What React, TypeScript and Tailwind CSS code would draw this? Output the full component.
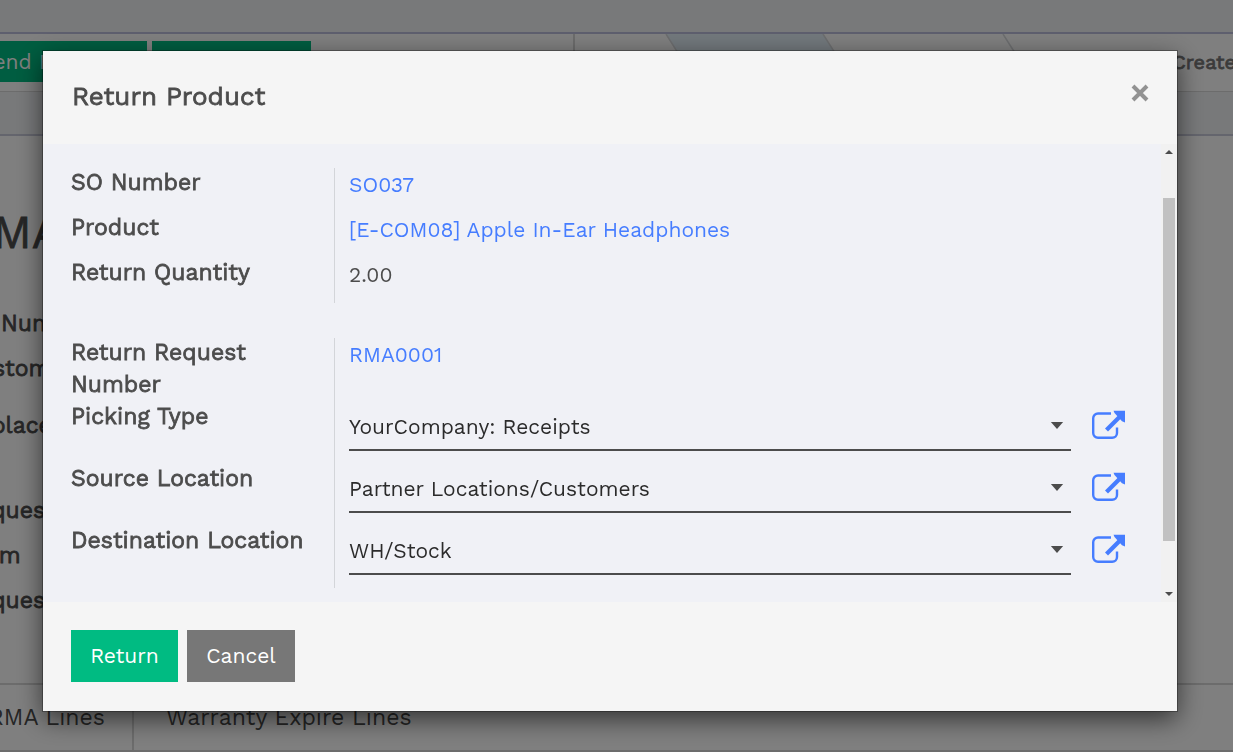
import { useState, type ReactNode } from "react";

const heavy = "font-normal [-webkit-text-stroke:0.8px_currentColor]";
const labelText = `text-[23px] leading-8 ${heavy}`;
const linkText = "text-[#467dff] hover:underline";

function Row({ label, htmlFor, tall, children }: { label: string; htmlFor?: string; tall?: boolean; children: ReactNode }) {
  return (
    <div className={tall ? "flex min-h-[62px]" : "flex min-h-[45px]"}>
      <div className="w-[263px] shrink-0 pr-4">
        <label htmlFor={htmlFor} className={`-mt-px -mb-px block ${labelText}`}>{label}</label>
      </div>
      <div className="flex min-w-0 flex-1 items-start border-l border-[#d3d5d9] pl-[14px] text-[21px] leading-[34px]">{children}</div>
    </div>
  );
}

function OpenIcon() {
  return (
    <svg viewBox="0 0 34 30" className="h-[30px] w-[34px]" fill="none" aria-hidden="true">
      <path d="M19 3.500H6a4.800 4.800 0 0 0-4.800 4.800v14.700a4.800 4.800 0 0 0 4.800 4.800h14.200a4.800 4.800 0 0 0 4.800-4.800v-5.500" stroke="#467dff" strokeWidth="2.400" />
      <path d="M14.500 20 28 6.500" stroke="#467dff" strokeWidth="4.200" />
      <path d="M21.500 0.800H33v11.700L30 11.300 22.500 3z" fill="#467dff" />
    </svg>
  );
}

function SelectField({ id, label, value }: { id: string; label: string; value: string }) {
  return (
    <Row label={label} htmlFor={id} tall>
      <div className="relative min-w-0 flex-1">
        <select id={id} defaultValue={value} className="block h-[49px] w-full appearance-none border-b-2 border-[#4c4c4c] bg-transparent pt-0.5 pr-10 text-[21px] text-[#2b2b2b] outline-none">
          <option>{value}</option>
        </select>
        <svg viewBox="0 0 14 8" className="pointer-events-none absolute top-5 right-[7px] h-[7px] w-[14px]" aria-hidden="true">
          <path d="M0 0h14L7 8z" fill="#4c4c4c" />
        </svg>
      </div>
      <button type="button" aria-label={`Open ${label}`} className="mt-2 mr-[35px] ml-[21px] shrink-0">
        <OpenIcon />
      </button>
    </Row>
  );
}

function Backdrop() {
  return (
    <div className="flex min-h-screen flex-col overflow-hidden bg-white text-[#4c4c4c]" aria-hidden="true">
      <div className="h-[34px] border-b-2 border-[#bcbfdc] bg-[#f0f2f5]" />
      <div className="flex h-[58px] items-start justify-between border-b border-[#d8d8d8]">
        <div className="flex pt-[7px] text-[21px] text-white">
          <div className="flex h-[41px] w-[147px] items-center overflow-hidden bg-[#00bb82]">
            <span className="-ml-5 whitespace-nowrap">Send Email</span>
          </div>
          <div className="ml-[5px] h-[41px] w-[159px] bg-[#00bb82]" />
        </div>
        <div className="flex h-full w-[660px] border-l-2 border-[#d8d8d8]">
          <svg viewBox="0 0 500 57" className="h-[57px] w-[500px] shrink-0">
            <path d="M91 0H248L284 57H127z" fill="#e4f0f8" />
            <path d="M91 0 127 57M248 0 284 57M428 0 464 57" stroke="#d8dadd" strokeWidth="1.500" fill="none" />
          </svg>
          <div className={`-mr-[3px] ml-auto self-center pb-px text-[20px] whitespace-nowrap text-[#777777] ${heavy}`}>Create</div>
        </div>
      </div>
      <div className="h-[44px] border-b-2 border-[#c8cada] bg-[#f0f2f5]" />
      <div className="flex-1 whitespace-nowrap">
        <div className={`-ml-[38px] pt-[67px] text-[46px] leading-[58px] ${heavy}`}>RMA0001</div>
        <div className={`flex h-[422px] flex-col pt-[47px] ${labelText}`}>
          <div className="h-[45px] pl-px">Number</div>
          <div className="-ml-[37px] h-[57px]">Customer</div>
          <div className="-ml-[37px] h-[85px]">Replace</div>
          <div className="-ml-[37px] h-[45px]">Request</div>
          <div className="-ml-[31px] h-[45px]">Item</div>
          <div className="-ml-[37px] h-[45px]">Request</div>
        </div>
        <div className="flex h-[69px] border-y-2 border-[#d8d8d8] text-[23px]">
          <div className="flex w-[134px] items-center justify-end border-r-2 border-[#d8d8d8] pt-0.5 pr-[27px]">RMA Lines</div>
          <div className="flex items-center pt-0.5 pl-8">Warranty Expire Lines</div>
        </div>
      </div>
    </div>
  );
}

export default function App() {
  const [open, setOpen] = useState(true);
  const close = () => setOpen(false);
  return (
    <div className="relative h-screen overflow-hidden font-['Work_Sans',Inter,sans-serif]">
      <Backdrop />
      {open && (
        <div className="fixed inset-0 overflow-hidden bg-black/50 pt-[51px] pr-14 pl-[43px]">
          <div role="dialog" aria-modal="true" aria-labelledby="dialog-title" className="bg-[#f5f5f5] text-[#4c4c4c] shadow-[0_0_0_1px_rgba(0,0,0,0.3),0_8px_24px_rgba(0,0,0,0.6)]">
            <header className="flex h-[93px] items-start justify-between pt-[29px] pr-7 pl-[29px]">
              <h1 id="dialog-title" className={`text-[26px] leading-8 ${heavy}`}>Return Product</h1>
              <button type="button" aria-label="Close" onClick={close} className="mt-1">
                <svg viewBox="0 0 18 18" className="size-[18px]" aria-hidden="true">
                  <path d="M2 2l14 14M16 2 2 16" stroke="#929292" strokeWidth="4" />
                </svg>
              </button>
            </header>
            <div className="flex bg-[#f0f1f6]">
              <main className="min-w-0 flex-1 pt-6 pb-[14px] pl-7">
                <div className="mb-[35px]">
                  <Row label="SO Number"><a href="#so" className={linkText}>SO037</a></Row>
                  <Row label="Product"><a href="#product" className={linkText}>[E-COM08] Apple In-Ear Headphones</a></Row>
                  <Row label="Return Quantity">2.00</Row>
                </div>
                <div>
                  <Row label="Return Request Number"><a href="#rma" className={linkText}>RMA0001</a></Row>
                  <div className="h-0.5 w-[264px] border-r border-[#d3d5d9]" />
                  <SelectField id="picking" label="Picking Type" value="YourCompany: Receipts" />
                  <SelectField id="source" label="Source Location" value="Partner Locations/Customers" />
                  <SelectField id="destination" label="Destination Location" value="WH/Stock" />
                </div>
              </main>
              <div className="flex w-4 shrink-0 flex-col items-center bg-[#f1f1f1] py-[6px]" aria-hidden="true">
                <svg viewBox="0 0 8 4" className="h-1 w-2"><path d="M0 4h8L4 0z" fill="#4c4c4c" /></svg>
                <div className="mt-[44px] mb-[51px] w-3 flex-1 bg-[#c1c1c1]" />
                <svg viewBox="0 0 8 4" className="h-1 w-2"><path d="M0 0h8L4 4z" fill="#4c4c4c" /></svg>
              </div>
            </div>
            <footer className="flex gap-[9px] px-7 pt-7 pb-[29px] text-[21px] text-white">
              <button type="button" onClick={close} className="h-[52px] w-[107px] bg-[#00bb82]">Return</button>
              <button type="button" onClick={close} className="h-[52px] w-[108px] bg-[#777777]">Cancel</button>
            </footer>
          </div>
        </div>
      )}
    </div>
  );
}
